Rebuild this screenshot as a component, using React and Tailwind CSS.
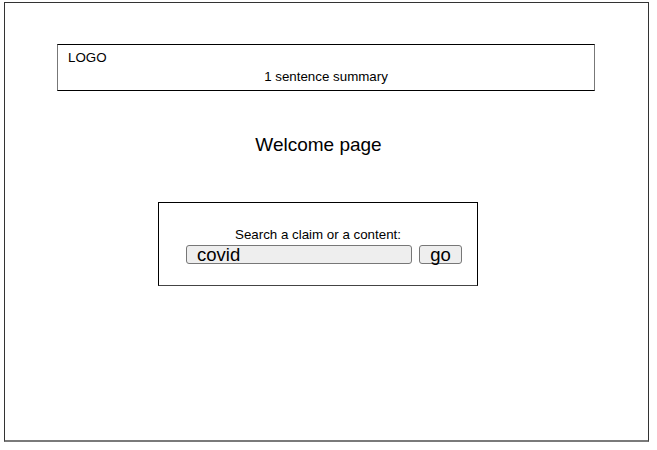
import React, { useState } from 'react';

const App = () => {
  const [query, setQuery] = useState('covid');

  return (
    <div className="w-[657px] h-[450px] bg-white pt-[2px] pl-[4px]" style={{ fontFamily: '"Liberation Sans", Arial, sans-serif' }}>
      <div className="w-[645px] h-[440px] border border-[#333] border-b-[#7a7a7a] border-b-2 text-black">
        {/* header */}
        <div className="ml-[52px] mt-[41px] w-[538px] h-[47px] border border-black border-l-[#777] border-r-[#777] pl-[10px] pt-[5px]">
          <div className="text-[13.33px] leading-[16px]">LOGO</div>
          <div className="text-[13.33px] leading-[16px] mt-[3px] -ml-[10px] text-center">1 sentence summary</div>
        </div>

        <h1 className="mt-[43px] text-center text-[19px] leading-[22px] pr-[16px] font-normal">Welcome page</h1>

        {/* search */}
        <div className="ml-[153px] mt-[46px] w-[320px] h-[84px] border border-black border-b-[#444] pt-[24px]">
          <div className="text-[13.33px] leading-[16px] text-center">Search a claim or a content:</div>
          <div className="flex items-center mt-[2px] ml-[27px] gap-[7px]">
            <input
              value={query}
              onChange={(e) => setQuery(e.target.value)}
              className="w-[226px] h-[19px] bg-[#eeeeee] border border-[#777] rounded-[3px] px-[10px] text-[18.5px] leading-[18px] outline-none"
            />
            <button className="w-[43px] h-[19px] bg-[#eeeeee] border border-[#777] rounded-[3px] text-[18.5px] leading-[16px]">go</button>
          </div>
        </div>
      </div>
    </div>
  );
};

export default App;
